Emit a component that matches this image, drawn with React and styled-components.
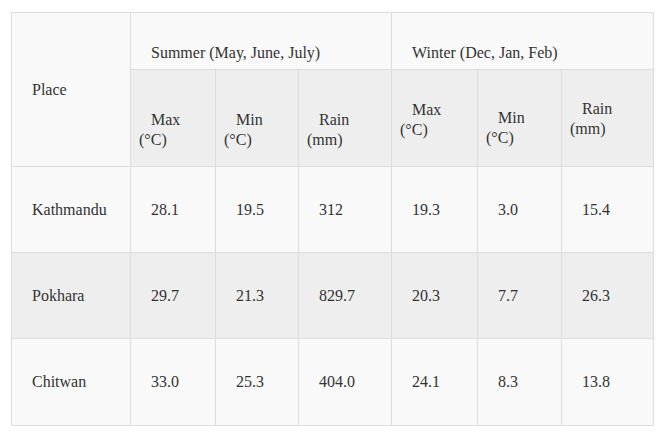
import React from 'react'
import styled, { createGlobalStyle } from 'styled-components'

const GlobalStyle = createGlobalStyle`
  html, body {
    margin: 0;
    padding: 0;
    background: #ffffff;
  }
`

const StyledPage = styled.div`
  padding: 12px 0 0 11px;
`
const StyledTable = styled.table`
  width: 642px;
  table-layout: fixed;
  border-collapse: collapse;
  border: 1px solid #dcdcdc;
  font-family: 'Liberation Serif', 'Times New Roman', serif;
  font-size: 16px;
  color: #333333;
`
const StyledRow = styled.tr`
  height: ${(p) => p.$height}px;
  background: ${(p) => (p.$shaded ? '#eeeeee' : '#f9f9f9')};
`
const StyledCell = styled.td`
  border: 1px solid #dcdcdc;
  padding: ${(p) => (p.$shift || 0) * 2}px 8px 0 ${(p) => p.$pad ?? 20}px;
  vertical-align: middle;
  line-height: 20px;
  text-align: left;
  font-weight: normal;
  font-family: inherit;
  font-size: inherit;
`
const StyledHeadLine = styled.span`
  display: block;
  padding-left: ${(p) => p.$indent || 0}px;
  white-space: nowrap;
`

const widths = [119, 85, 83, 93, 86, 84, 92]

const subHeads = [
  { top: 'Max', unit: '(°C)', shift: 12 },
  { top: 'Min', unit: '(°C)', shift: 12 },
  { top: 'Rain', unit: '(mm)', shift: 12 },
  { top: 'Max', unit: '(°C)', shift: 1.5 },
  { top: 'Min', unit: '(°C)', shift: 9.5 },
  { top: 'Rain', unit: '(mm)', shift: 1 },
]

const rows = [
  { place: 'Kathmandu', values: ['28.1', '19.5', '312', '19.3', '3.0', '15.4'] },
  { place: 'Pokhara', values: ['29.7', '21.3', '829.7', '20.3', '7.7', '26.3'], shaded: true },
  { place: 'Chitwan', values: ['33.0', '25.3', '404.0', '24.1', '8.3', '13.8'] },
]

const App = () => (
  <StyledPage>
    <GlobalStyle />
    <StyledTable>
      <colgroup>
        {widths.map((w, i) => (
          <col key={i} style={{ width: w }} />
        ))}
      </colgroup>
      <thead>
        <StyledRow $height={57}>
          <StyledCell as="th" rowSpan={2}>
            Place
          </StyledCell>
          <StyledCell as="th" colSpan={3} $shift={11.5}>
            Summer (May, June, July)
          </StyledCell>
          <StyledCell as="th" colSpan={3} $shift={11.5}>
            Winter (Dec, Jan, Feb)
          </StyledCell>
        </StyledRow>
        <StyledRow $height={97} $shaded>
          {subHeads.map((h, i) => (
            <StyledCell as="th" key={i} $pad={8} $shift={h.shift}>
              <StyledHeadLine $indent={12}>{h.top}</StyledHeadLine>
              <StyledHeadLine>{h.unit}</StyledHeadLine>
            </StyledCell>
          ))}
        </StyledRow>
      </thead>
      <tbody>
        {rows.map((r, i) => (
          <StyledRow key={r.place} $height={i === 2 ? 87 : 86} $shaded={r.shaded}>
            <StyledCell>{r.place}</StyledCell>
            {r.values.map((v, j) => (
              <StyledCell key={j}>{v}</StyledCell>
            ))}
          </StyledRow>
        ))}
      </tbody>
    </StyledTable>
  </StyledPage>
)

export default App
